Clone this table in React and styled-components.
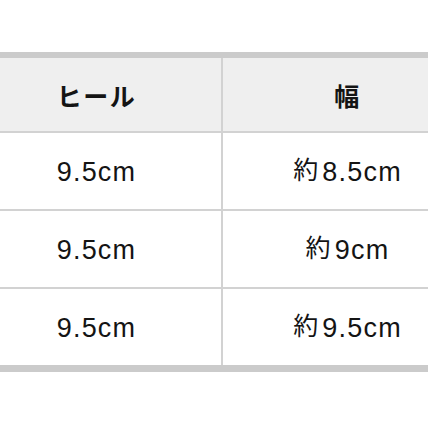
import React from 'react';
import styled, { createGlobalStyle } from 'styled-components';

const GlobalStyle = createGlobalStyle`
  html, body {
    margin: 0;
    padding: 0;
    background: #fff;
  }
  body {
    font-family: 'Liberation Sans', 'Noto Sans CJK JP', sans-serif;
    color: #141414;
  }
`;

const Page = styled.div`
  width: 428px;
  height: 428px;
  overflow: hidden;
  padding-top: 52px;
  box-sizing: border-box;
`;

const SizeTable = styled.table`
  width: 500px;
  margin-left: -28px;
  border-collapse: collapse;
  table-layout: fixed;
  border-top: 6px solid #cbcbcb;
  border-bottom: 7px solid #cbcbcb;
`;

const HeadCell = styled.th`
  height: 73px;
  padding: 0;
  background: #efefef;
  font-family: 'Noto Sans CJK JP', sans-serif;
  font-weight: 700;
  font-size: 25px;
  letter-spacing: 1.5px;
  text-align: center;
  vertical-align: middle;
  border-right: 2px solid #d2d2d2;
  border-bottom: 2px solid #d2d2d2;

  &:last-child {
    border-right: none;
  }
`;

const Cell = styled.td`
  height: 74px;
  padding: 2px 0 0;
  font-size: 27px;
  line-height: 34px;
  letter-spacing: 1.2px;
  text-align: center;
  vertical-align: middle;
  border-right: 2px solid #d2d2d2;
  border-bottom: 2px solid #d2d2d2;

  &:last-child {
    border-right: none;
  }

  tr:last-child & {
    border-bottom: none;
  }
`;

const Approx = styled.span`
  font-family: 'Noto Sans CJK JP', sans-serif;
  font-size: 25px;
  line-height: 1;
  vertical-align: 2px;
  margin-right: ${(props) => props.$gap}px;
`;

const rows = [
  { heel: '9.5cm', width: '8.5cm' },
  { heel: '9.5cm', width: '9cm' },
  { heel: '9.5cm', width: '9.5cm' },
];

const App = () => {
  return (
    <Page>
      <GlobalStyle />
      <SizeTable>
        <thead>
          <tr>
            <HeadCell>ヒール</HeadCell>
            <HeadCell>幅</HeadCell>
          </tr>
        </thead>
        <tbody>
          {rows.map((row, i) => (
            <tr key={i}>
              <Cell>{row.heel}</Cell>
              <Cell>
                <Approx $gap={3}>約</Approx>
                {row.width}
              </Cell>
            </tr>
          ))}
        </tbody>
      </SizeTable>
    </Page>
  );
};

export default App;
